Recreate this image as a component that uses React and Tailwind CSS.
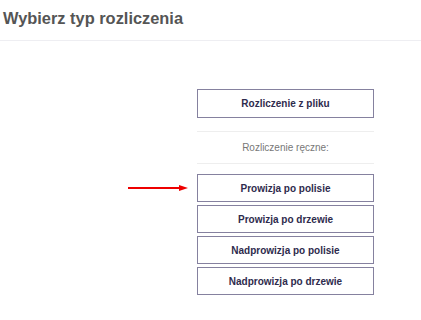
import React from "react";

const btn =
  "h-[28px] w-full border border-[#85819f] bg-white flex items-center justify-center text-[10px] font-bold text-[#2e2b4d]";

export default function App() {
  return (
    <div className="w-[421px] h-[320px] bg-white overflow-hidden" style={{ fontFamily: '"Liberation Sans", Arial, sans-serif' }}>
      <div className="h-[41px] border-b border-[#eeeef2] flex items-center pl-[3px]">
        <h1 className="text-[16.4px] font-bold text-[#555555] leading-none -mt-[4px]">Wybierz typ rozliczenia</h1>
      </div>
      <div className="ml-[197px] w-[177px] pt-[48px] flex flex-col">
        <button className={btn + " h-[29px]"}>Rozliczenie z pliku</button>
        <div className="mt-[13px] h-px bg-[#eeeeee]" />
        <div className="h-[31px] flex items-center justify-center text-[10px] text-[#777777]">Rozliczenie ręczne:</div>
        <div className="h-px bg-[#eeeeee]" />
        <div className="mt-[10px] flex flex-col gap-[3px]">
          <div className="relative">
            <svg className="absolute left-[-70px] top-[10px]" width="62" height="8" viewBox="0 0 62 8">
              <line x1="1" y1="4" x2="54" y2="4" stroke="#ee0000" strokeWidth="1.8" />
              <polygon points="52,1 61,4 52,7" fill="#ee0000" />
            </svg>
            <button className={btn}>Prowizja po polisie</button>
          </div>
          <button className={btn}>Prowizja po drzewie</button>
          <button className={btn}>Nadprowizja po polisie</button>
          <button className={btn}>Nadprowizja po drzewie</button>
        </div>
      </div>
    </div>
  );
}
